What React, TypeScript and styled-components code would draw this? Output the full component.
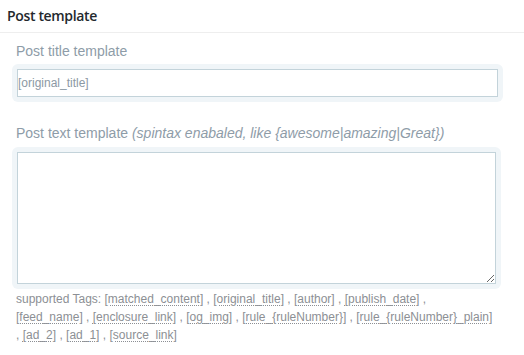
import React from "react";
import styled, { createGlobalStyle } from "styled-components";

const Global = createGlobalStyle`
  html, body { margin: 0; padding: 0; background: #fff; }
  body { font-family: "Liberation Sans", Arial, sans-serif; }
`;

const Panel = styled.section`
  width: 524px;
  height: 355px;
  background: #fff;
  overflow: hidden;
`;

const Header = styled.h2`
  margin: 0;
  height: 33px;
  box-sizing: border-box;
  padding: 6px 7px 0;
  border-bottom: 1px solid #eeeeee;
  font-family: "Open Sans", "Noto Sans", sans-serif;
  font-weight: 600;
  font-size: 14px;
  letter-spacing: -0.35px;
  line-height: 20px;
  color: #23282d;
`;

const Body = styled.div`
  padding: 8px 30px 0 16px;
`;

const Field = styled.div<{ $gap: number }>`
  margin-top: ${(p) => p.$gap}px;
  display: flex;
  flex-direction: column;
  align-items: flex-start;
`;

const Label = styled.label<{ $space: number }>`
  font-family: "Liberation Sans", Arial, sans-serif;
  font-size: 14px;
  line-height: 20px;
  color: #8e9ca8;
  margin-bottom: ${(p) => p.$space}px;
`;

const Hint = styled.em`
  font-style: italic;
`;

const Halo = styled.div`
  margin-left: -4px;
  padding: 5px;
  background: #f0f5f8;
  border-radius: 6px;
`;

const TextInput = styled.input`
  box-sizing: border-box;
  display: block;
  margin: 0;
  width: 481px;
  height: 28px;
  padding: 0;
  border: 1px solid #c3d3da;
  border-radius: 0;
  background: #fff;
  font-family: "Liberation Sans", Arial, sans-serif;
  font-size: 12px;
  color: #8c99a4;
  outline: none;
`;

const TextArea = styled.textarea`
  box-sizing: border-box;
  display: block;
  margin: 0;
  width: 479px;
  height: 132px;
  padding: 2px;
  border: 1px solid #c3d3da;
  border-radius: 0;
  background: #fff;
  font-family: "Liberation Sans", Arial, sans-serif;
  font-size: 12px;
  outline: none;
`;

const Tags = styled.p`
  margin: 1px 0 0;
  font-family: "Liberation Sans", Arial, sans-serif;
  font-size: 12px;
  line-height: 18px;
  color: #8c8f94;
`;

const Tag = styled.abbr`
  text-decoration: underline dotted;
  text-underline-offset: 2px;
  text-decoration-thickness: 1px;
  color: #8c8f94;
`;

const tags = [
  "[matched_content]",
  "[original_title]",
  "[author]",
  "[publish_date]",
  "[feed_name]",
  "[enclosure_link]",
  "[og_img]",
  "[rule_{ruleNumber}]",
  "[rule_{ruleNumber}_plain]",
  "[ad_2]",
  "[ad_1]",
  "[source_link]",
];

export default function App() {
  return (
    <>
      <Global />
      <Panel>
        <Header>Post template</Header>
        <Body>
          <Field $gap={0}>
            <Label $space={3}>Post title template</Label>
            <Halo>
              <TextInput defaultValue="[original_title]" />
            </Halo>
          </Field>
          <Field $gap={21}>
            <Label $space={4}>
              Post text template{" "}
              <Hint>(spintax enabaled, like {"{awesome|amazing|Great}"})</Hint>
            </Label>
            <Halo>
              <TextArea />
            </Halo>
          </Field>
          <Tags>
            supported Tags:{" "}
            {tags.map((t, i) => (
              <React.Fragment key={t}>
                <Tag>{t}</Tag>
                {i < tags.length - 1 ? " , " : ""}
              </React.Fragment>
            ))}
          </Tags>
        </Body>
      </Panel>
    </>
  );
}
